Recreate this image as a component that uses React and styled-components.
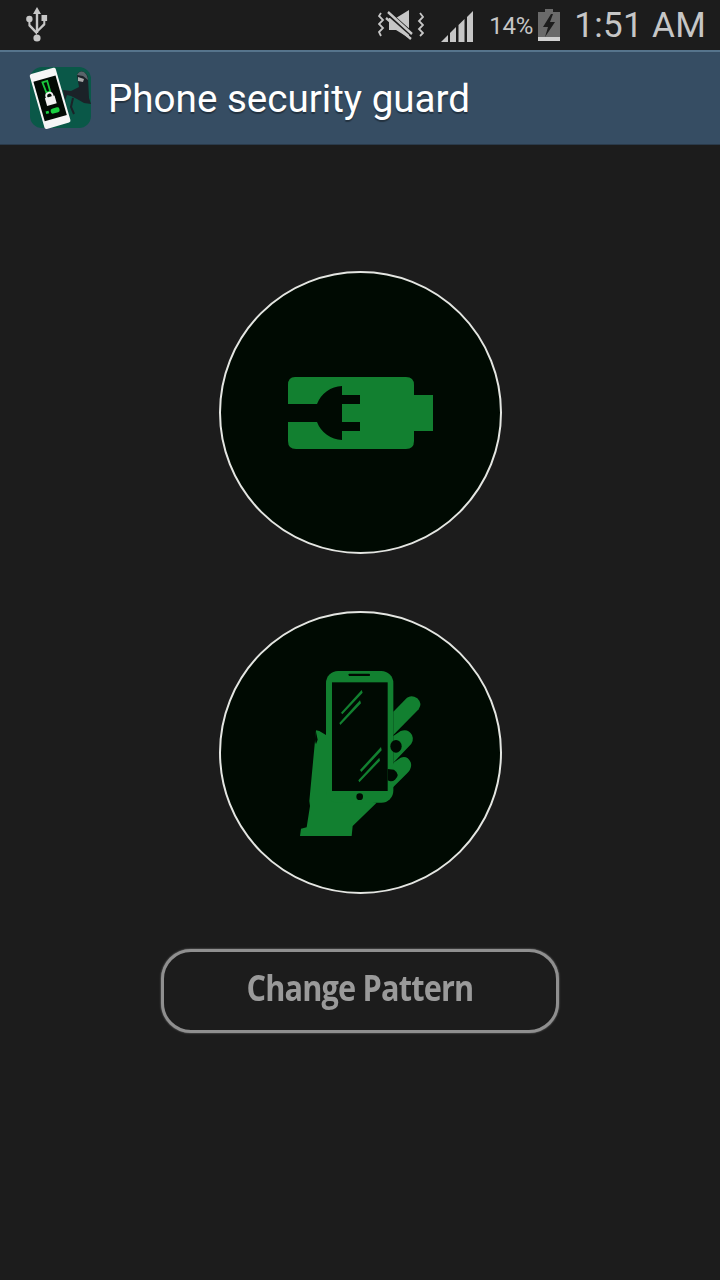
import React from "react";
import styled, { createGlobalStyle } from "styled-components";

const GlobalStyle = createGlobalStyle`
  html, body {
    margin: 0;
    padding: 0;
    background: #1c1c1c;
  }
`;

const Screen = styled.div`
  width: 720px;
  height: 1280px;
  overflow: hidden;
  display: flex;
  flex-direction: column;
  background: #1c1c1c;
  font-family: Roboto, "Liberation Sans", sans-serif;
`;

const StatusBar = styled.div`
  height: 50px;
  display: flex;
  align-items: center;
  padding: 0 14px 0 26px;
  color: #c6c6c6;
  flex-shrink: 0;
`;

const StatusRight = styled.div`
  margin-left: auto;
  display: flex;
  align-items: center;
`;

const SignalGap = styled.span`
  width: 16px;
`;

const Percent = styled.span`
  font-size: 24px;
  letter-spacing: -0.3px;
  margin: 2px 6px 0 15px;
  width: 43px;
`;

const Clock = styled.span`
  font-size: 35px;
  margin-left: 14px;
  letter-spacing: 0.3px;
`;

const ActionBar = styled.div`
  height: 95px;
  box-sizing: border-box;
  border-top: 2px solid #56748c;
  border-bottom: 1px solid #2a3a4a;
  background: #364d63;
  display: flex;
  align-items: center;
  padding: 0 0 0 27px;
  flex-shrink: 0;
`;

const Title = styled.h1`
  margin: 0 0 0 17px;
  font-size: 38.6px;
  font-weight: 400;
  color: #fff;
  text-shadow: 0 2px 1px rgba(0, 0, 0, 0.35);
  white-space: nowrap;
`;

const Main = styled.main`
  flex: 1;
  display: flex;
  flex-direction: column;
  align-items: center;
  padding-top: 126px;
`;

const RoundButton = styled.button`
  width: 283px;
  height: 283px;
  box-sizing: border-box;
  padding: 0;
  border-radius: 50%;
  border: 2px solid #e4e6e2;
  background: #000a02;
  display: flex;
  align-items: center;
  justify-content: center;
  margin-bottom: 57px;
`;

const PatternButton = styled.button`
  width: 398px;
  height: 84px;
  box-sizing: border-box;
  margin-top: -2px;
  border: 3px solid #8f8f8f;
  border-radius: 30px;
  background: #1c1c1c;
  color: #9a9a9a;
  font-family: "Open Sans", "Liberation Sans", sans-serif;
  font-size: 33px;
  font-weight: 700;
  letter-spacing: -0.9px;
  padding: 0 0 7px;
  box-shadow: 0 0 2px #8f8f8f;
`;

const PatternLabel = styled.span`
  display: inline-block;
  filter: blur(0.6px);
  transform: scale(0.93, 1.08);
`;

const UsbIcon = () => (
  <svg width="22" height="36" viewBox="0 0 22 36" fill="#c6c6c6">
    <path d="M11 0 L15 7 H12.2 V26 H9.8 V7 H7 Z" />
    <circle cx="11" cy="31" r="3.6" />
    <circle cx="3.4" cy="12" r="3.2" />
    <rect x="15.5" y="8" width="5.6" height="6" />
    <path d="M2.4 14 H4.4 V17.5 L11 24.5 V28 L2.4 19 Z" />
    <path d="M17.3 13 H19.3 V18 L11 26 V23 L17.3 16.6 Z" />
  </svg>
);

const MuteVibrateIcon = () => (
  <svg width="46" height="30" viewBox="0 0 46 30" fill="none">
    <path d="M11 8 H18 L31 0 V28 L18 20 H11 Z" fill="#c6c6c6" />
    <path d="M10 3 L36 26" stroke="#1c1c1c" strokeWidth="5" />
    <path d="M10 2 L34 24 M8 8 L33 29" stroke="#c6c6c6" strokeWidth="2.4" />
    <path d="M3 3 L1 6 L5 10 L1 14 L5 18 L1 22 L3 26" stroke="#c6c6c6" strokeWidth="1.8" />
    <path d="M42 3 L45 7 L41 11 L45 15 L41 19 L45 23 L42 26" stroke="#c6c6c6" strokeWidth="1.8" />
  </svg>
);

const SignalIcon = () => (
  <svg width="34" height="34" viewBox="0 -2 34 34" fill="#c6c6c6">
    <path d="M0 33 L8 25 V33 Z" />
    <path d="M10 23 L16 17 V33 H10 Z" />
    <path d="M18.5 15 L24.5 9 V33 H18.5 Z" />
    <path d="M27 7 L33 1 V33 H27 Z" />
  </svg>
);

const BatteryIcon = () => (
  <svg width="22" height="32" viewBox="0 0 22 32">
    <rect x="7" y="0" width="8" height="3" fill="#6a6a6a" />
    <rect x="0" y="3" width="22" height="25" fill="#6a6a6a" />
    <rect x="0" y="28" width="22" height="4" fill="#d0d0d0" />
    <path d="M13 5 L5 18 H10 L7 28 L17 13 H12 L15 5 Z" fill="#1c1c1c" />
  </svg>
);

const AppLogo = () => (
  <svg width="64" height="64" viewBox="0 0 64 64">
    <rect x="3" y="1" width="61" height="61" rx="12" fill="#0a5848" />
    <path d="M50 9 C52 3 60 5 61 12 L62 32 L64 38 L57 37 L50 33 L44 30 L40 29 L38 35 L36 24 L44 25 L52 21 Z" fill="#1b2228" />
    <path d="M50 9 C53 3 60 5 61 14 L56 10 Z" fill="#59646a" />
    <path d="M51 11 L57 13 L56 16 L51 15 Z" fill="#a8a8a8" />
    <path d="M46 32 L44 41 L47 48" stroke="#1b2228" strokeWidth="2" fill="none" />
    <g transform="rotate(-16 22.5 32)">
      <rect x="9.5" y="4" width="27" height="57" rx="2" fill="#f6f6f6" />
      <rect x="11.5" y="12" width="23" height="41" fill="#020a04" />
      <path d="M20 15 L25 15 L25 26 L21 26 Z" fill="none" stroke="#19c63c" strokeWidth="1.8" />
      <rect x="18" y="31" width="10" height="8" fill="#f0f0f0" />
      <circle cx="23" cy="30" r="3.2" fill="none" stroke="#f0f0f0" strokeWidth="1.8" />
      <rect x="20" y="43" width="9" height="5" rx="2" fill="#19d040" />
      <rect x="15" y="44" width="3" height="2.5" fill="#19d040" />
    </g>
  </svg>
);

const PlugBatteryIcon = () => (
  <svg width="146" height="74" viewBox="0 0 146 74" fill="#128030">
    <path d="M8 1 H119 Q127 1 127 9 V19 H146 V55 H127 V65 Q127 73 119 73 H9 Q1 73 1 65 V46 H30 A28 28 0 0 0 55 64 V55 H73 V46 H55 V28 H73 V19 H55 V10 A28 28 0 0 0 30 28 H1 V9 Q1 1 8 1 Z" />
  </svg>
);

const HandPhoneIcon = () => (
  <svg width="160" height="180" viewBox="0 6 480 540" fill="#128030">
    <path d="M108 208 L118 210 L138 222 L150 400 L290 425 L218 495 L215 525 H60 L63 503 L80 499 L90 435 L88 420 Z" />
    <path d="M108 212 Q102 235 108 250 L113 236 Z" fill="#000a02" />
    <rect x="138" y="30" width="202" height="395" rx="36" />
    <rect x="156" y="64" width="167" height="326" fill="#000a02" />
    <rect x="206" y="38" width="64" height="7" rx="2" fill="#000a02" />
    <circle cx="239" cy="407" r="10" fill="#000a02" />
    <path d="M183 155 L245 87 L248 95 L187 160 Z M178 186 L240 118 L243 127 L181 192 Z" />
    <path d="M240 327 L303 258 L305 268 L244 333 Z M235 358 L298 290 L300 299 L238 364 Z" />
    <path d="M340 152 L381 110 Q395 100 412 112 Q428 128 416 145 L340 222 Z" />
    <path d="M340 225 L362 210 Q385 202 396 222 Q405 242 385 258 L340 305 Z" />
    <path d="M340 305 L362 290 Q382 282 392 304 Q398 322 380 338 L340 378 L324 400 Z" />
    <ellipse cx="348" cy="256" rx="17" ry="19" fill="#000a02" />
    <path d="M323 324 L342 326 Q362 340 345 356 Q335 364 323 358 Z" fill="#000a02" />
  </svg>
);

export default function App() {
  return (
    <Screen>
      <GlobalStyle />
      <StatusBar>
        <UsbIcon />
        <StatusRight>
          <MuteVibrateIcon />
          <SignalGap />
          <SignalIcon />
          <Percent>14%</Percent>
          <BatteryIcon />
          <Clock>1:51 AM</Clock>
        </StatusRight>
      </StatusBar>
      <ActionBar>
        <AppLogo />
        <Title>Phone security guard</Title>
      </ActionBar>
      <Main>
        <RoundButton aria-label="Charger alarm">
          <PlugBatteryIcon />
        </RoundButton>
        <RoundButton aria-label="Motion alarm">
          <HandPhoneIcon />
        </RoundButton>
        <PatternButton>
          <PatternLabel>Change Pattern</PatternLabel>
        </PatternButton>
      </Main>
    </Screen>
  );
}
